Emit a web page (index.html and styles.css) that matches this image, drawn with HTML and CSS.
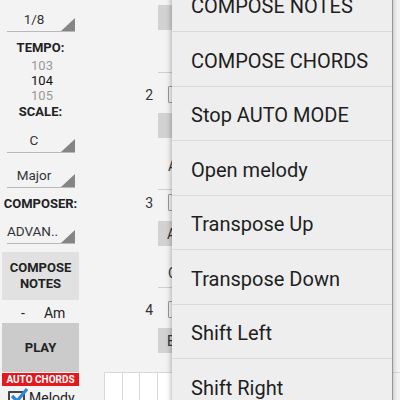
FILE: index.html
```html
<!DOCTYPE html>
<html>
<head>
<meta charset="utf-8">
<link rel="stylesheet" href="styles.css">
</head>
<body>
<div class="screen">
  <div class="left">
    <div class="spinner s1"><span>1/8</span></div>
    <div class="label l-tempo">TEMPO:</div>
    <div class="picker">
      <div class="dim">103</div>
      <div>104</div>
      <div class="dim">105</div>
    </div>
    <div class="label l-scale">SCALE:</div>
    <div class="spinner s2"><span>C</span></div>
    <div class="spinner s3"><span>Major</span></div>
    <div class="label l-comp">COMPOSER:</div>
    <div class="spinner s4"><span>ADVAN..</span></div>
    <div class="btn compose">COMPOSE<br>NOTES</div>
    <div class="chord"><span>-</span><span>Am</span></div>
    <div class="btn play">PLAY</div>
    <div class="auto">AUTO CHORDS</div>
    <div class="melody">
      <span class="cb"><svg width="18" height="16" viewBox="0 0 18 16"><path d="M2 8 L7 13 L17 1" stroke="#2f86d8" stroke-width="3.2" fill="none"/></svg></span>
      <span class="mtext">Melody</span>
    </div>
  </div>
  <div class="right">
    <div class="gbox b1"></div>
    <div class="uline u1"></div>
    <div class="numrow n1"><span class="num">2</span><span class="chk"></span></div>
    <div class="gbox b2"></div>
    <div class="uline u2"><span>A</span></div>
    <div class="numrow n2"><span class="num">3</span><span class="chk"></span></div>
    <div class="gbox b3"><span>A</span></div>
    <div class="uline u3"><span>C</span></div>
    <div class="numrow n3"><span class="num">4</span><span class="chk"></span></div>
    <div class="gbox b4"><span>E</span></div>
    <div class="grid">
      <div class="cell"></div><div class="cell"></div><div class="cell"></div><div class="cell"></div><div class="cell"></div><div class="cell"></div>
    </div>
  </div>
  <div class="menu">
    <div class="item">COMPOSE NOTES</div>
    <div class="item">COMPOSE CHORDS</div>
    <div class="item">Stop AUTO MODE</div>
    <div class="item">Open melody</div>
    <div class="item">Transpose Up</div>
    <div class="item">Transpose Down</div>
    <div class="item">Shift Left</div>
    <div class="item">Shift Right</div>
  </div>
</div>
</body>
</html>
```
FILE: styles.css
```css
* { box-sizing: border-box; }
html, body { margin: 0; padding: 0; }
body {
  width: 400px;
  height: 400px;
  overflow: hidden;
  background: #f3f3f3;
  font-family: Roboto, "Noto Sans", sans-serif;
  color: #222;
}
.screen {
  position: relative;
  width: 400px;
  height: 400px;
  display: flex;
  overflow: hidden;
}
.left {
  width: 80px;
  flex: none;
  padding-left: 2px;
  display: flex;
  flex-direction: column;
}
.left > *, .right > * { flex: none; }
.spinner {
  position: relative;
  margin-left: 5px;
  width: 68px;
  height: 26px;
  border-bottom: 1px solid #b8b8b8;
  padding-right: 14px;
  display: flex;
  align-items: center;
  justify-content: center;
  font-size: 13.5px;
  color: #333;
}
.spinner::after {
  content: "";
  position: absolute;
  right: 0;
  bottom: 0;
  width: 14px;
  height: 13px;
  background: #858585;
  clip-path: polygon(100% 0, 100% 100%, 0 100%);
}
.s1 { margin-top: 6px; }
.label {
  width: 77px;
  height: 16px;
  line-height: 16px;
  text-align: center;
  font-weight: bold;
  font-size: 13px;
  color: #222;
}
.l-tempo { margin-top: 8px; }
.picker {
  margin-top: 2px;
  width: 77px;
  padding-left: 3px;
  text-align: center;
  font-size: 13px;
  line-height: 15px;
  color: #111;
}
.picker .dim { color: #999; }
.l-scale { margin-top: 1px; }
.s2 { margin-top: 7px; }
.s3 { margin-top: 9px; }
.l-comp { margin-top: 8px; }
.s4 { margin-top: 6px; }
.s4 span { padding-right: 3px; }
.btn {
  width: 77px;
  display: flex;
  align-items: center;
  justify-content: center;
  text-align: center;
  font-weight: bold;
  font-size: 13px;
  line-height: 16px;
  color: #222;
}
.compose {
  margin-top: 8px;
  height: 48px;
  background: #e1e1e1;
}
.chord {
  height: 23px;
  width: 77px;
  display: flex;
  align-items: center;
  font-size: 14px;
  color: #222;
  padding-left: 19px;
  padding-top: 2px;
  gap: 19px;
}
.play {
  height: 49px;
  background: #cbcbcb;
}
.auto {
  margin-top: 1px;
  width: 77px;
  height: 13px;
  background: #e4181d;
  color: #fff;
  font-weight: bold;
  font-size: 10px;
  line-height: 13px;
  text-align: center;
}
.melody {
  margin-top: 2px;
  display: flex;
  align-items: flex-start;
  gap: 4px;
  padding-left: 6px;
}
.cb {
  position: relative;
  width: 17px;
  height: 17px;
  margin-top: 3px;
  background: #f4f4f4;
  border: 2px solid #444;
  border-radius: 1px;
}
.cb svg { position: absolute; left: 0; top: -5px; }
.mtext { font-size: 14px; line-height: 18px; margin-top: 1px; }

.right {
  flex: 1;
  display: flex;
  flex-direction: column;
  position: relative;
}
.gbox {
  margin-left: 78px;
  width: 60px;
  height: 25px;
  background: #d2d2d2;
  display: flex;
  align-items: center;
  padding-left: 9px;
  font-size: 14px;
  color: #333;
}
.b1 { margin-top: 5px; }
.uline {
  margin-left: 78px;
  width: 100px;
  border-bottom: 1px solid #cfcfcf;
  display: flex;
  align-items: flex-end;
  padding-left: 10px;
  font-size: 14px;
  color: #333;
}
.u1 { height: 43px; }
.numrow {
  display: flex;
  align-items: center;
  height: 17px;
}
.num {
  width: 73px;
  text-align: right;
  font-size: 14px;
  color: #333;
}
.chk {
  margin-left: 15px;
  width: 14px;
  height: 17px;
  border: 1px solid #999;
  border-radius: 1px;
}
.n1 { margin-top: 13px; }
.b2 { margin-top: 10px; }
.u2 { height: 52px; padding-bottom: 15px; }
.n2 { margin-top: 4px; }
.b3 { margin-top: 10px; }
.u3 { height: 42px; padding-bottom: 6px; }
.n3 { margin-top: 13px; }
.b4 { margin-top: 10px; }
.grid {
  margin-top: 19px;
  margin-left: 24px;
  display: flex;
  height: 40px;
  border-top: 1px solid #d8d8d8;
}
.cell {
  width: 17.5px;
  flex: none;
  height: 40px;
  background: #fff;
  border-left: 1px solid #d8d8d8;
}

.menu {
  position: absolute;
  left: 172px;
  top: -22.5px;
  width: 220px;
  background: #eeeeee;
  box-shadow: 0 0 5px 1px rgba(0,0,0,0.28), 1px 0 0 #b5b5b5;
}
.item {
  height: 54.5px;
  border-bottom: 1px solid #dadada;
  display: flex;
  align-items: center;
  padding-left: 19px;
  padding-top: 4px;
  font-size: 20px;
  color: #1e1e1e;
}
```
